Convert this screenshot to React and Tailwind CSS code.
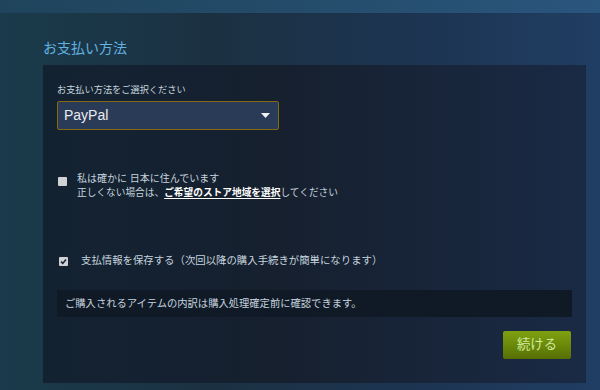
import React from "react";

const font = { fontFamily: '"Liberation Sans", "Noto Sans CJK JP", sans-serif' };

// --- small checkbox used in the form ---
const Box = ({ checked, className = "" }) => (
  <span
    className={`flex h-[9px] w-[9px] shrink-0 items-center justify-center rounded-[1px] bg-[#cfd3d6] ${className}`}
  >
    {checked && (
      <svg width="7" height="7" viewBox="0 0 7 7">
        <path d="M1 3.6 L2.8 5.4 L6 1.4" stroke="#1c2433" strokeWidth="1.6" fill="none" />
      </svg>
    )}
  </span>
);

export default function App() {
  return (
    <div
      style={font}
      className="flex h-[390px] w-[600px] flex-col overflow-hidden bg-[linear-gradient(to_right,#1a3b4b_0%,#1b3142_35%,#1d3452_70%,#203e63_100%)]"
    >
      {/* top band */}
      <div className="h-[13px] shrink-0 bg-[linear-gradient(to_right,#1f445c_0%,#244c6a_50%,#2a557d_100%)]" />

      <div className="pl-[43px]">
        <h2 className="mt-[25px] text-[14px] font-normal leading-[20px] text-[#62b1e0]">お支払い方法</h2>

        {/* Panel */}
        <div className="mt-[7px] flex w-[543px] flex-col bg-[linear-gradient(to_right,#132231_0%,#16202f_45%,#1a2a45_100%)] pb-[24px] pl-[14px] pr-[14px] pt-[18px]">
          <div className="text-[9.2px] leading-[14px] text-[#c6d4df]">お支払い方法をご選択ください</div>

          <div className="mt-[4px] flex h-[29px] w-[222px] items-center justify-between rounded-[2px] border border-[#876813] bg-[#2a3b58] pl-[6px] pr-[8px]">
            <span className="text-[14px] text-[#ebebeb]">PayPal</span>
            <svg width="9" height="5" viewBox="0 0 9 5">
              <path d="M0 0 H9 L4.5 5 Z" fill="#f2f2f2" />
            </svg>
          </div>

          {/* country confirmation */}
          <div className="mt-[42px] flex items-start pl-[1px]">
            <Box className="mt-[5px]" />
            <div className="ml-[10px] text-[10px] leading-[14px] text-[#c6d4df]">
              <div>私は確かに 日本に住んでいます</div>
              <div className="text-[9.7px]">
                正しくない場合は、
                <span className="font-semibold text-white underline underline-offset-2">ご希望のストア地域を選択</span>
                してください
              </div>
            </div>
          </div>

          {/* save info */}
          <div className="mt-[54px] flex items-start pl-[2px]">
            <Box checked className="mt-[3px] h-[8px] w-[8px]" />
            <div className="ml-[13px] text-[10.4px] leading-[14px] text-[#c6d4df]">
              支払情報を保存する（次回以降の購入手続きが簡単になります）
            </div>
          </div>

          {/* info strip */}
          <div className="mt-[22px] flex h-[27px] items-center bg-[#101a27] pl-[8px] text-[10.3px] text-[#c6d4df]">
            ご購入されるアイテムの内訳は購入処理確定前に確認できます。
          </div>

          <div className="mt-[14px] flex justify-end pr-[1px]">
            <button className="h-[28px] w-[68px] rounded-[2px] bg-[linear-gradient(to_bottom,#80a012_0%,#6b8a0a_50%,#566e05_100%)] text-[13.3px] text-[#d2eb9c]">
              続ける
            </button>
          </div>
        </div>
      </div>
    </div>
  );
}
